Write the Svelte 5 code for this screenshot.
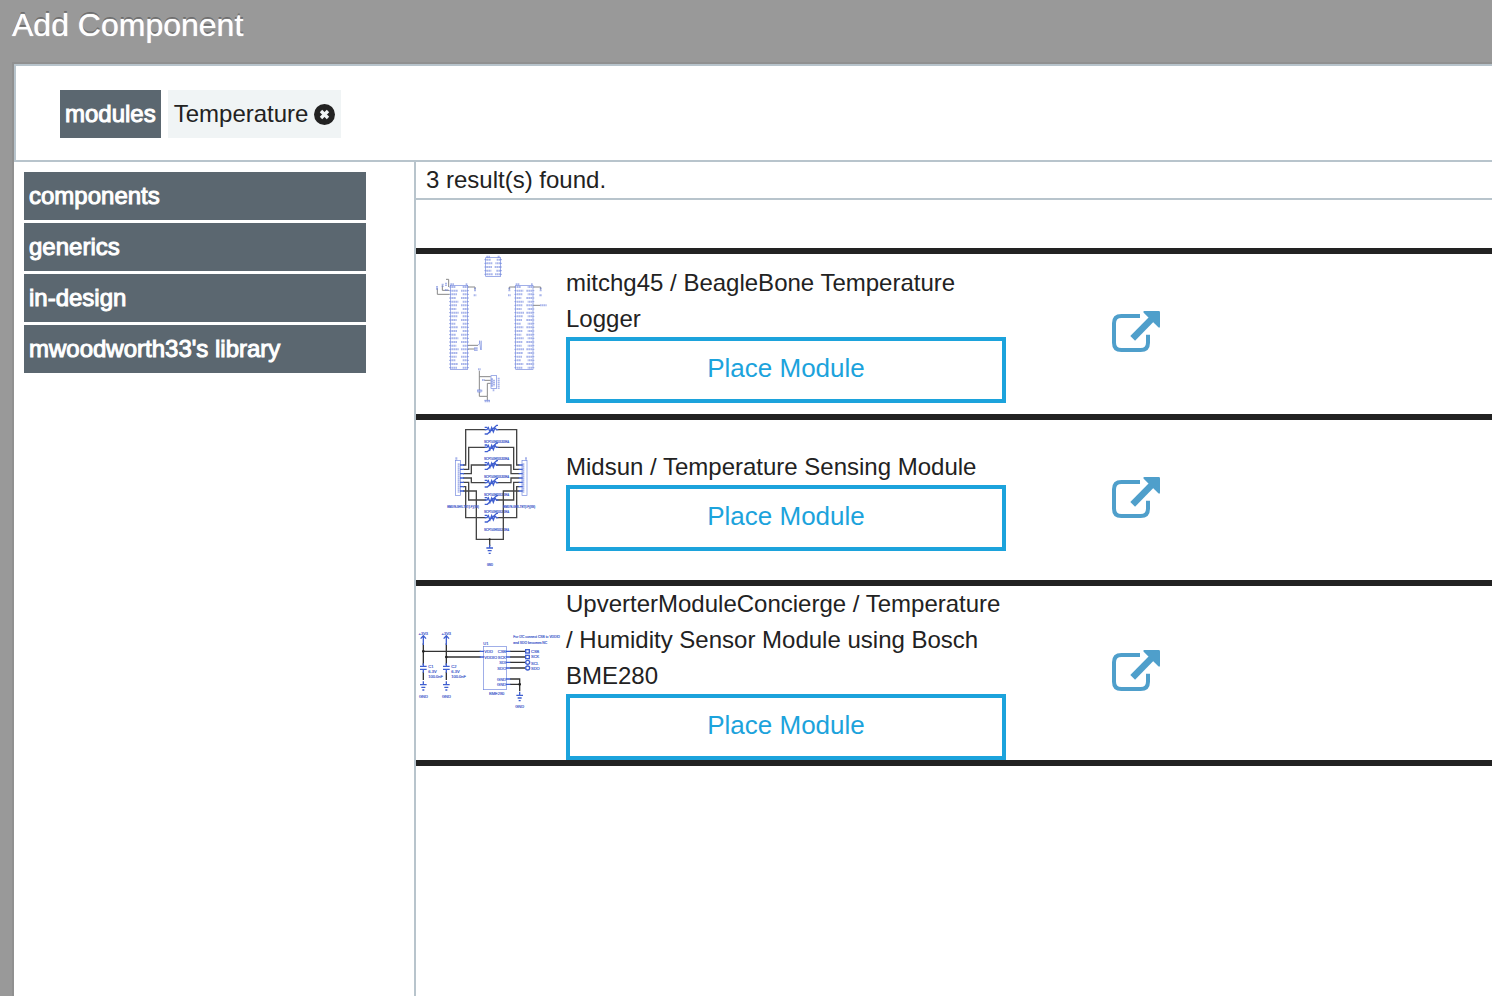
<script>
  const categories = ['components', 'generics', 'in-design', "mwoodworth33's library"];

  const modules = [
    { id: 'beaglebone', name: 'mitchg45 / BeagleBone Temperature Logger', thumb: beaglebone },
    { id: 'midsun', name: 'Midsun / Temperature Sensing Module', thumb: midsun },
    {
      id: 'bme280',
      name: 'UpverterModuleConcierge / Temperature / Humidity Sensor Module using Bosch BME280',
      thumb: bme280,
    },
  ];

  let filters = $state(['Temperature']);

  function removeFilter(name) {
    filters = filters.filter((f) => f !== name);
  }

  // Header pins, top to bottom, on both sides of a long connector.
  const pins = Array.from({ length: 23 }, (_, i) => 123 + i * 11);

  // Thermistor branches: y of the part, x of the bend, y where each side meets the connectors.
  const branches = [
    { y: 47, x: 155, pin: 153 },
    { y: 100, x: 164, pin: 166 },
    { y: 153, x: 172, pin: 179 },
    { y: 206, x: 172, pin: 192 },
    { y: 258, x: 164, pin: 205 },
    { y: 311, x: 155, pin: 218 },
  ];
</script>

{#snippet connector(x)}
  <rect class="part" {x} y="118" width="52" height="252" />
  {#each pins as y, i}
    <path class="label" d="M{x + 3} {y}h{13 + ((i * 7) % 10)}M{x + 49} {y}h-{13 + ((i * 5) % 10)}" />
    <path class="pin" d="M{x - 4} {y}h6M{x + 50} {y}h6" />
  {/each}
  <path class="label" d="M{x} 115h12M{x + 46} 115h6" />
{/snippet}

{#snippet ground(x, y)}
  <path class="part bold" d="M{x} {y - 10}v10M{x - 10} {y}h20M{x - 6} {y + 8}h12M{x - 3} {y + 16}h6" />
{/snippet}

{#snippet beaglebone()}
  <svg class="thumb faint" viewBox="6 24 450 480" aria-hidden="true">
    <rect class="part" x="215" y="35" width="45" height="56" />
    {#each [41, 52, 63, 74, 85] as y, i}
      <path class="label" d="M217 {y}h{14 + ((i * 5) % 7)}M259 {y}h-{12 + ((i * 3) % 8)}" />
      <path class="pin" d="M211 {y}h6M258 {y}h6" />
    {/each}
    <path class="label" d="M217 32h11M251 32h7" />

    {@render connector(109)}
    {@render connector(305)}

    <path class="wire" d="M104 123v-23h-8M85 118v15h20M70 127v18h36M162 123h21v8M162 298h30M162 309h20" />
    <path class="wire" d="M304 123h-18v8M358 123h22v8M358 178h20" />
    <path
      class="label"
      d="M69 120v12M86 113v10M96 110v10M93 132h8M183 125v12M179 148h8M286 125v12M282 148h8M380 125v12M376 148h8M378 178h20M183 304v12M188 304v12"
    />
    <path class="part" d="M192 298l5-6v-8l3 28M202 284v28" />

    <path class="wire" d="M196 374v58M196 392h34M211 403h19M220 451v-39h10M196 437v14h24v12" />
    <rect class="part" x="231" y="389" width="17" height="38" />
    <path class="label" d="M192 370h8M234 397v26M240 401v20M254 395v34M204 402h8M236 433h5M189 434h16M212 466h16" />
    <path class="part" d="M190 432h12M190 438h12M211 463h17" />
  </svg>
{/snippet}

{#snippet midsun()}
  <svg class="thumb dense" viewBox="6 18 450 480" aria-hidden="true">
    <rect class="part" x="124" y="139" width="15" height="105" />
    <rect class="part" x="324" y="139" width="15" height="105" />
    <path class="label" d="M127 130v9M336 130v9M134 148v88M328 148v88" />
    {#each branches as b}
      <path class="wire" d="M147 {b.pin}H{b.x}V{b.y}H216M316 {b.pin}H{463 - b.x}V{b.y}H246" />
      <path class="part bold" d="M138 {b.pin}h12M314 {b.pin}h12" />
      <path
        class="part bold"
        d="M212 {b.y}h7l4-6 5 13 5-13 5 13 5-13 4 6h6M212 {b.y + 13}h8L248 {b.y - 13}h4M212 {b.y - 7}h8"
      />
      <text x="248" y={b.y + 39} text-anchor="middle">NCP15XH103J03RA</text>
    {/each}
    <path class="wire" d="M147 231h40v145h81V231h48M227 376v20" />
    <path class="part bold" d="M138 231h12M314 231h12" />
    <circle class="node" cx="227" cy="376" r="3" />
    {@render ground(227, 402)}
    <text x="147" y="283" text-anchor="middle">BM07B-GHS-TBT(LF)(SN)</text>
    <text x="316" y="283" text-anchor="middle">BM07B-GHS-TBT(LF)(SN)</text>
    <text x="228" y="455" text-anchor="middle">GND</text>
  </svg>
{/snippet}

{#snippet bme280()}
  <svg class="thumb" viewBox="6 39 450 480" aria-hidden="true">
    <path class="wire dark" d="M28 190v65M28 214h172M97 190v65M97 231h103M28 275v25M97 275v25" />
    <path class="wire dark" d="M288 214h45M288 231h45M288 247h45M288 264h45M288 297h29v37M288 313h29" />
    {#each [28, 97] as x}
      <path class="part bold" d="M{x} 195v-28M{x - 8} 176l8-9 8 9M{x - 10} 259h20M{x - 10} 268h20M{x} 268v10M{x} 250v9" />
      {@render ground(x, 314)}
      <text {x} y="164" text-anchor="middle">+3V3</text>
      <text {x} y="353" text-anchor="middle">GND</text>
      <text x={x + 15} y="263">C{x === 28 ? 1 : 2}</text>
      <text x={x + 15} y="279">6.3V</text>
      <text x={x + 15} y="295">100.0nF</text>
    {/each}
    <rect class="part" x="208" y="199" width="69" height="130" />
    <path class="part bold" d="M197 214h13M197 231h13M276 214h13M276 231h13M276 247h13M276 264h13M276 297h13M276 313h13" />
    <g>
      <rect class="part bold" x="335" y="209" width="11" height="10" />
      <rect class="part bold" x="335" y="226" width="11" height="10" />
      <circle class="part bold" cx="341" cy="247" r="6" />
      <circle class="part bold" cx="341" cy="264" r="6" />
    </g>
    <text x="208" y="196">U1</text>
    <text x="211" y="219">VDD</text>
    <text x="211" y="236">VDDIO</text>
    {#each [['CSB', 214], ['SCK', 231], ['SDI', 247], ['SDO', 264], ['GND', 297], ['GND', 313]] as [label, y]}
      <text x="276" y={y + 5} text-anchor="end">{label}</text>
    {/each}
    {#each [['CSB', 214], ['SCK', 230], ['SCL', 249], ['SDO', 264]] as [label, y]}
      <text x="351" y={y + 5}>{label}</text>
    {/each}
    <text x="248" y="345" text-anchor="middle">BME280</text>
    <text class="note" x="298" y="175">For I2C connect CSB to VDDIO</text>
    <text class="note" x="298" y="193">and SDO becomes NC</text>
    {@render ground(317, 346)}
    <text x="317" y="384" text-anchor="middle">GND</text>
    <circle class="node" cx="28" cy="214" r="4" />
    <circle class="node" cx="97" cy="231" r="4" />
    <circle class="node" cx="317" cy="313" r="4" />
  </svg>
{/snippet}

<div class="dialog">
  <h1>Add Component</h1>

  <div class="panel">
    <div class="filters">
      <button class="chip scope" type="button">modules</button>
      {#each filters as filter}
        <span class="chip filter">
          {filter}
          <button class="remove" type="button" aria-label="Remove {filter}" onclick={() => removeFilter(filter)}>
            <svg viewBox="0 0 21 21" aria-hidden="true">
              <circle cx="10.5" cy="10.5" r="10.5" />
              <path d="M7 7l7 7M14 7l-7 7" />
            </svg>
          </button>
        </span>
      {/each}
    </div>

    <div class="body">
      <nav class="sidebar">
        {#each categories as category}
          <button class="category" type="button">{category}</button>
        {/each}
      </nav>

      <main>
        <p class="count">{modules.length} result(s) found.</p>
        <ul class="results">
          {#each modules as item (item.id)}
            <li>
              {@render item.thumb()}
              <div class="info">
                <span class="name">{item.name}</span>
                <button class="place" type="button">Place Module</button>
              </div>
              <a class="open" href="#{item.id}" aria-label="Open {item.name}">
                <svg viewBox="66 60 144 126" aria-hidden="true">
                  <path class="box" d="M150 78H94q-22 0-22 22v58q0 22 22 22h58q22 0 22-22v-24" />
                  <path class="shaft" d="M128 145L188 84" />
                  <path class="head" d="M163 63h43q4 0 4 4v42q0 6-5 3L161 68q-3-4 2-5z" />
                </svg>
              </a>
            </li>
          {/each}
        </ul>
      </main>
    </div>
  </div>
</div>

<style>
  :global(body) {
    background: #999;
  }
  .dialog {
    min-height: 100vh;
    display: flex;
    flex-direction: column;
    background: #999;
    color: #222;
    font: 24px/36px 'Liberation Sans', Arial, sans-serif;
  }
  h1 {
    margin: 0;
    padding: 0 12px 14px;
    color: #fff;
    font-size: 32px;
    font-weight: 400;
    line-height: 50px;
    text-shadow:
      0 0 1px #fff,
      0 -2px 0 rgba(0, 0, 0, 0.3);
  }
  button {
    appearance: none;
    border: none;
    background: none;
    margin: 0;
    padding: 0;
    color: inherit;
    font: inherit;
    cursor: pointer;
  }
  .panel {
    flex: 1;
    display: flex;
    flex-direction: column;
    margin-left: 14px;
    background: #fff;
    box-shadow: 0 0 0 2px rgba(0, 0, 0, 0.06);
  }
  .filters {
    display: flex;
    gap: 7px;
    padding: 24px 44px 22px;
    border: 2px solid #b8c4cc;
    border-right: none;
  }
  .chip {
    display: flex;
    align-items: center;
    gap: 6px;
    height: 48px;
    padding: 0 6px;
  }
  .scope,
  .category {
    padding: 0 5px;
    background: #5b6770;
    color: #fff;
    -webkit-text-stroke: 1px #fff;
  }
  .filter {
    background: #f0f4f5;
  }
  .remove,
  .remove svg {
    display: block;
    width: 21px;
    height: 21px;
  }
  .remove circle {
    fill: #222;
  }
  .remove path {
    fill: none;
    stroke: #f0f4f5;
    stroke-width: 3.4;
  }
  .body {
    flex: 1;
    display: flex;
  }
  .sidebar {
    flex: none;
    box-sizing: border-box;
    width: 402px;
    display: flex;
    flex-direction: column;
    gap: 3px;
    padding: 10px 48px 10px 10px;
    border-right: 2px solid #b8c4cc;
  }
  .category {
    height: 48px;
    text-align: left;
  }
  main {
    flex: 1;
    min-width: 0;
  }
  .count {
    margin: 0;
    padding: 0 10px;
    border-bottom: 2px solid #b8c4cc;
  }
  .results {
    list-style: none;
    margin: 48px 0 0;
    padding: 0;
    border-top: 6px solid #222;
  }
  li {
    display: grid;
    grid-template-columns: 150px 440px 260px;
    align-items: center;
    min-height: 160px;
    border-bottom: 6px solid #222;
  }
  .info {
    display: flex;
    flex-direction: column;
  }
  .place {
    box-sizing: border-box;
    height: 66px;
    padding-bottom: 4px;
    border: 4px solid #1ca3dc;
    color: #1ca3dc;
    font-size: 26px;
  }
  .open {
    justify-self: center;
    padding-bottom: 6px;
  }
  .open svg {
    display: block;
    width: 48px;
    height: 42px;
  }
  .box,
  .shaft {
    fill: none;
    stroke: #4f9fcb;
    stroke-width: 12;
  }
  .shaft {
    stroke-width: 20;
  }
  .head {
    fill: #4f9fcb;
  }

  /* Schematic previews */
  .thumb {
    display: block;
    width: 150px;
    height: 160px;
  }
  .part,
  .pin,
  .label,
  .wire {
    fill: none;
    stroke: #7186dd;
    stroke-width: 2;
  }
  .bold {
    stroke: #3f5fd0;
    stroke-width: 4;
  }
  .label {
    stroke-width: 6;
    stroke-dasharray: 5 1;
    opacity: 0.6;
  }
  .wire {
    stroke: #444;
    stroke-width: 4;
  }
  .faint .wire {
    stroke: #888;
    stroke-width: 3;
  }
  .dark {
    stroke: #333;
  }
  .node {
    fill: #222;
  }
  .thumb text {
    fill: #3f5acb;
    font-family: 'Liberation Sans Narrow', 'Liberation Sans', sans-serif;
    font-size: 12px;
    stroke: #3f5acb;
    stroke-width: 0.5;
  }
  .dense text {
    font-size: 8px;
  }
  .thumb .note {
    font-size: 10px;
  }
</style>
